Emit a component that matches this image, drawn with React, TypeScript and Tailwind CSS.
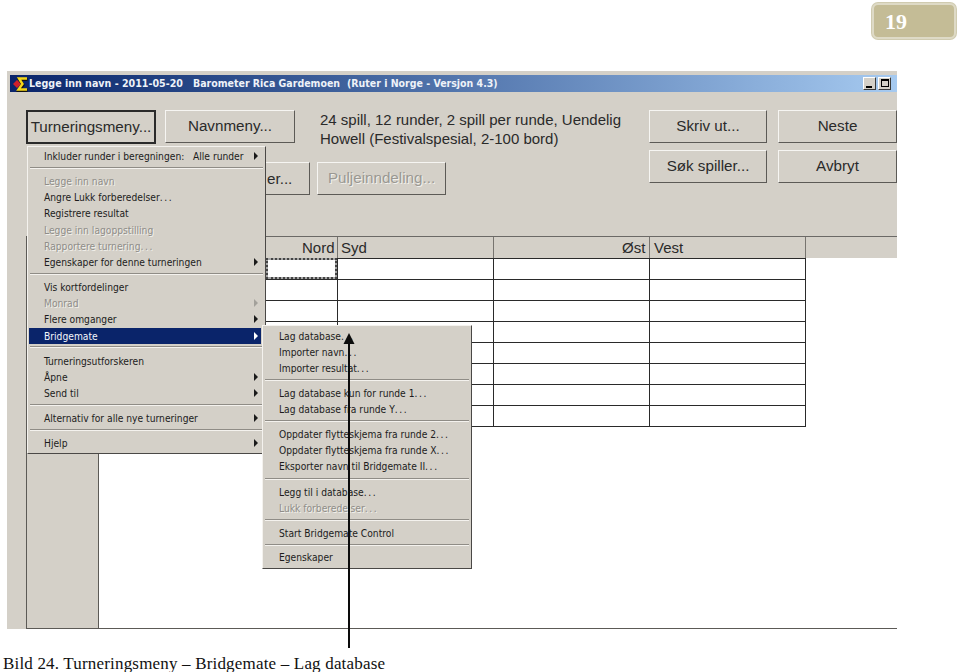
const win = "font-[Liberation_Sans,Arial,sans-serif]";

type Item = { y: number; t?: string; d?: boolean; a?: boolean; sep?: boolean; r?: string };

const mainMenu: Item[] = [
  { y: 156, t: "Inkluder runder i beregningen:", a: true, r: "Alle runder" },
  { y: 168, sep: true },
  { y: 181, t: "Legge inn navn", d: true },
  { y: 197, t: "Angre Lukk forberedelser..." },
  { y: 213, t: "Registrere resultat" },
  { y: 230, t: "Legge inn lagoppstilling", d: true },
  { y: 246, t: "Rapportere turnering...", d: true },
  { y: 262, t: "Egenskaper for denne turneringen", a: true },
  { y: 274, sep: true },
  { y: 287, t: "Vis kortfordelinger" },
  { y: 303, t: "Monrad", d: true, a: true },
  { y: 319, t: "Flere omganger", a: true },
  { y: 347, sep: true },
  { y: 361, t: "Turneringsutforskeren" },
  { y: 377, t: "Åpne", a: true },
  { y: 393, t: "Send til", a: true },
  { y: 405, sep: true },
  { y: 418, t: "Alternativ for alle nye turneringer", a: true },
  { y: 430, sep: true },
  { y: 443, t: "Hjelp", a: true },
];

const subMenu: Item[] = [
  { y: 336, t: "Lag database..." },
  { y: 352, t: "Importer navn..." },
  { y: 368, t: "Importer resultat..." },
  { y: 380, sep: true },
  { y: 393, t: "Lag database kun for runde 1..." },
  { y: 409, t: "Lag database fra runde Y..." },
  { y: 421, sep: true },
  { y: 434, t: "Oppdater flytteskjema fra runde 2..." },
  { y: 450, t: "Oppdater flytteskjema fra runde X..." },
  { y: 466, t: "Eksporter navn til Bridgemate II..." },
  { y: 479, sep: true },
  { y: 492, t: "Legg til i database..." },
  { y: 508, t: "Lukk forberedelser...", d: true },
  { y: 520, sep: true },
  { y: 533, t: "Start Bridgemate Control" },
  { y: 545, sep: true },
  { y: 557, t: "Egenskaper" },
];

function Arrow({ y, light, x, dim }: { y: number; light?: boolean; x: number; dim?: boolean }) {
  return (
    <svg className="absolute" style={{ left: x, top: y - 5 }} width="6" height="10" viewBox="0 0 6 10">
      <path d="M1 1 L5 5 L1 9 Z" fill={light ? "#ffffff" : dim ? "#a3a19b" : "#1a1a1a"} />
    </svg>
  );
}

const menuFont = "[font-family:DejaVu_Sans_Condensed,DejaVu_Sans,sans-serif] text-[10.2px] leading-[16px]";

function MenuText({ t }: { t: string }) {
  if (t.endsWith("...")) {
    return (
      <>
        {t.slice(0, -3)}
        <span className="tracking-[1.6px]">...</span>
      </>
    );
  }
  return <>{t}</>;
}

function MenuRows({ items, left, textX, width, arrowX }: { items: Item[]; left: number; textX: number; width: number; arrowX: number }) {
  return (
    <>
      {items.map((it, i) =>
        it.sep ? (
          <div key={i} className="absolute box-border border-t border-b border-t-[#8f8c86] border-b-[#f4f2ee] h-[2px]" style={{ left: left + 3, top: it.y - 1, width: width - 6 }} />
        ) : (
          <div key={i}>
            <div
              className={`absolute whitespace-pre ${menuFont} ${it.d ? "text-[#8f8d88] [text-shadow:1px_1px_0_#f2f0ec]" : "text-[#1c1c1c]"}`}
              style={{ left: textX, top: it.y - 7 }}
            >
              <MenuText t={it.t ?? ""} />
            </div>
            {it.r && (
              <div className={`absolute whitespace-pre ${menuFont} text-[#1c1c1c]`} style={{ left: 193, top: it.y - 7 }}>
                {it.r}
              </div>
            )}
            {it.a && <Arrow y={it.y} x={arrowX} dim={it.d} />}
          </div>
        )
      )}
    </>
  );
}

function Btn({ x, y, w, h, label, focus, disabled }: { x: number; y: number; w: number; h: number; label: string; focus?: boolean; disabled?: boolean }) {
  return (
    <div
      className={`absolute box-border flex items-center justify-center bg-[#d4d0c8] ${win} text-[15.2px] ${
        focus
          ? "border-2 border-[#2a2a2a] text-[#2a2a2a]"
          : "border border-t-[#f6f5f2] border-l-[#f6f5f2] border-r-[#5c5a56] border-b-[#5c5a56] " + (disabled ? "text-[#9a9892] [text-shadow:1px_1px_0_#f2f0ec]" : "text-[#2a2a2a]")
      }`}
      style={{ left: x, top: y, width: w, height: h }}
    >
      {label}
    </div>
  );
}

const rowYs = [258, 279, 300, 321, 342, 363, 384, 405, 426];
const colXs = [337, 493, 649, 805];
const titleFont = "[font-family:DejaVu_Sans_Condensed,DejaVu_Sans,sans-serif] font-bold leading-[17px] text-[#eef2f8] whitespace-pre";

export default function App() {
  return (
    <div className="relative w-[960px] h-[672px] bg-white overflow-hidden">
      {/* Page badge */}
      <div className="absolute left-[872px] top-[3px] w-[84px] h-[36px] box-border rounded-[6px] border-2 border-[#dedac6] bg-[#c4bc96] shadow-[0_0_0_1px_#d0cbb0]">
        <span className="absolute left-[11px] top-[4px] font-[Liberation_Serif,serif] font-bold text-[22px] leading-[26px] text-white">19</span>
      </div>

      {/* Window */}
      <div className="absolute left-[7px] top-[71px] w-[890px] h-[558px] bg-[#d4d0c8]" />
      <div className="absolute left-[10px] top-[75px] w-[887px] h-[17px] bg-gradient-to-r from-[#0a246a] to-[#a6caf0]" />
      <svg className="absolute left-[13px] top-[75px]" width="16" height="17" viewBox="0 0 16 17">
        <path d="M0 9 L4 5 L8 9 L4 13 Z" fill="#d0202a" />
        <path d="M14 4 H6 L9.5 9.5 L5.5 15 H14" stroke="#111" strokeWidth="3" fill="none" transform="translate(0.5 0.5)" />
        <path d="M14 3.5 H6 L9.5 9 L5.5 14.5 H14" stroke="#f6d818" strokeWidth="2.4" fill="none" />
      </svg>
      <div className={`absolute left-[29px] top-[75px] h-[17px] text-[10.6px] ${titleFont}`}>Legge inn navn - 2011-05-20</div>
      <div className={`absolute left-[193px] top-[75px] h-[17px] text-[10.5px] ${titleFont}`}>Barometer Rica Gardemoen</div>
      <div className={`absolute left-[347px] top-[75px] h-[17px] text-[10.5px] ${titleFont}`}>(Ruter i Norge - Versjon 4.3)</div>
      <div className="absolute left-[863px] top-[77px] w-[13px] h-[13px] box-border bg-[#d4d0c8] border border-[#3a3a3a] border-t-white border-l-white">
        <div className="absolute left-[2px] top-[8px] w-[6px] h-[2px] bg-black" />
      </div>
      <div className="absolute left-[878px] top-[77px] w-[13px] h-[13px] box-border bg-[#d4d0c8] border border-[#3a3a3a] border-t-white border-l-white">
        <div className="absolute left-[2px] top-[1px] w-[8px] h-[8px] box-border border border-black border-t-2" />
      </div>

      {/* Buttons */}
      <Btn x={26} y={110} w={130} h={34} label="Turneringsmeny..." focus />
      <Btn x={165} y={110} w={130} h={33} label="Navnmeny..." />
      <Btn x={240} y={162} w={70} h={33} label="" />
      <div className={`absolute left-[267px] top-[170px] ${win} text-[15.2px] leading-[18px] text-[#2a2a2a]`}>er...</div>
      <Btn x={317} y={162} w={129} h={33} label="Puljeinndeling..." disabled />
      <Btn x={649} y={110} w={118} h={33} label="Skriv ut..." />
      <Btn x={778} y={110} w={119} h={33} label="Neste" />
      <Btn x={649} y={150} w={118} h={33} label="Søk spiller..." />
      <Btn x={778} y={150} w={119} h={33} label="Avbryt" />

      {/* Description */}
      <div className={`absolute left-[320px] top-[110px] whitespace-pre ${win} text-[15px] leading-[19px] text-[#2a2a2a]`}>
        {"24 spill, 12 runder, 2 spill per runde, Uendelig\nHowell (Festivalspesial, 2-100 bord)"}
      </div>

      {/* Grid */}
      <div className="absolute left-[26px] top-[236px] w-[871px] h-[22px] bg-[#d4d0c8] border-t border-[#6b6966]" />
      <div className="absolute left-[26px] top-[236px] w-[1px] h-[393px] bg-[#5c5a56]" />
      <div className="absolute left-[99px] top-[258px] w-[798px] h-[370px] bg-white" />
      <div className="absolute left-[98px] top-[454px] w-[1px] h-[174px] bg-[#5c5a56]" />
      <div className="absolute left-[26px] top-[628px] w-[871px] h-[1px] bg-[#5c5a56]" />
      <div className={`absolute left-[302px] top-[239px] ${win} text-[15px] leading-[18px] text-[#2a2a2a]`}>Nord</div>
      <div className={`absolute left-[341px] top-[239px] ${win} text-[15px] leading-[18px] text-[#2a2a2a]`}>Syd</div>
      <div className={`absolute left-[622px] top-[239px] ${win} text-[15px] leading-[18px] text-[#2a2a2a]`}>Øst</div>
      <div className={`absolute left-[654px] top-[239px] ${win} text-[15px] leading-[18px] text-[#2a2a2a]`}>Vest</div>
      {[337, 493, 649, 805].map((x) => (
        <div key={x} className="absolute top-[237px] w-[1px] h-[21px] bg-[#77746f]" style={{ left: x }} />
      ))}
      {rowYs.map((y) => (
        <div key={y} className="absolute left-[266px] w-[540px] h-[1px] bg-[#2a2a2a]" style={{ top: y }} />
      ))}
      {colXs.map((x) => (
        <div key={x} className="absolute top-[258px] w-[1px] h-[169px] bg-[#2a2a2a]" style={{ left: x }} />
      ))}
      <div className="absolute left-[266px] top-[258px] w-[71px] h-[21px] box-border border-2 border-dotted border-[#444] bg-[#a5a5a5]">
        <div className="w-full h-full bg-white" />
      </div>

      {/* Main menu */}
      <div className="absolute left-[27px] top-[146px] w-[239px] h-[308px] box-border bg-[#d4d0c8] border-r border-b border-[#4a4846] border-t border-l border-t-[#f4f2ee] border-l-[#f4f2ee]" />
      <MenuRows items={mainMenu} left={27} textX={44} width={239} arrowX={253} />
      <div className="absolute left-[29px] top-[328px] w-[232px] h-[16px] bg-[#0a246a]" />
      <div className={`absolute left-[44px] top-[329px] whitespace-pre ${menuFont} text-[#f4f6fb]`}>Bridgemate</div>
      <Arrow y={336} x={253} light />

      {/* Submenu */}
      <div className="absolute left-[262px] top-[325px] w-[210px] h-[244px] box-border bg-[#d4d0c8] border-r border-b border-[#4a4846] border-t border-l border-t-[#f4f2ee] border-l-[#f4f2ee]" />
      <MenuRows items={subMenu} left={262} textX={279} width={210} arrowX={0} />

      {/* Pointer arrow */}
      <div className="absolute left-[348px] top-[343px] w-[2px] h-[305px] bg-[#0c0c0c]" />
      <svg className="absolute left-[343px] top-[333px]" width="12" height="11" viewBox="0 0 12 11">
        <path d="M6 0 L11.5 11 H0.5 Z" fill="#0c0c0c" />
      </svg>

      {/* Caption */}
      <div className="absolute left-[3px] top-[654px] whitespace-pre font-[Liberation_Serif,serif] text-[17px] leading-[19px] tracking-[0.18px] text-[#111]">
        Bild 24. Turneringsmeny – Bridgemate – Lag database
      </div>
    </div>
  );
}
